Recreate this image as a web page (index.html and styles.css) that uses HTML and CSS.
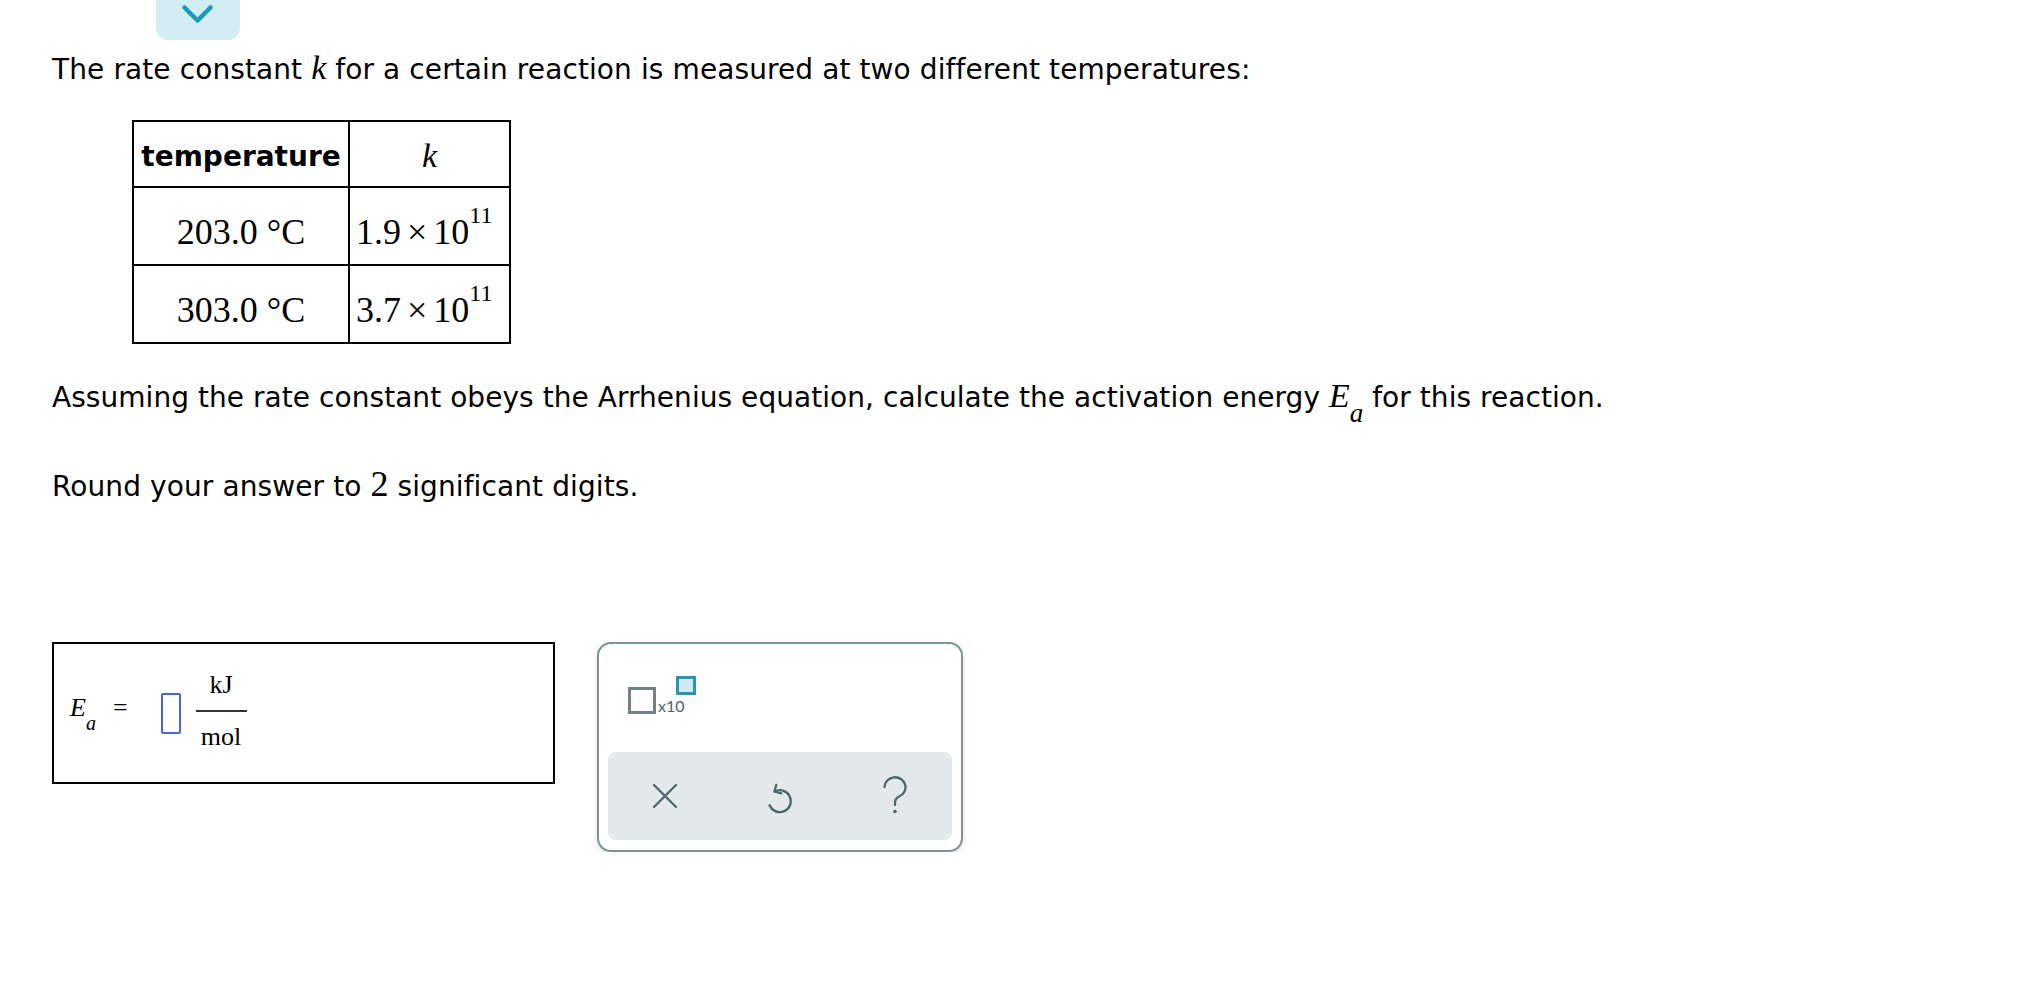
FILE: index.html
```html
<!DOCTYPE html>
<html lang="en">
<head>
<meta charset="utf-8">
<title>Arrhenius question</title>
<link rel="stylesheet" href="styles.css">
</head>
<body>
<div class="page">
  <div class="toggle">
    <svg class="chev" width="84" height="40" viewBox="0 0 84 40"><polyline points="28.5,7.5 41.5,20.5 54.5,7.5" fill="none" stroke="#1b9bb7" stroke-width="4.5" stroke-linecap="round" stroke-linejoin="round"/></svg>
  </div>

  <p class="line first">The rate constant <span class="m"><i>k</i></span> for a certain reaction is measured at two different temperatures:</p>

  <table class="data">
    <colgroup><col class="col1"><col class="col2"></colgroup>
    <tr class="hrow"><th>temperature</th><th><i class="mk">k</i></th></tr>
    <tr class="vrow"><td>203.0 °C</td><td class="c2">1.9<span class="times">×</span>10<sup>11</sup></td></tr>
    <tr class="vrow"><td>303.0 °C</td><td class="c2">3.7<span class="times">×</span>10<sup>11</sup></td></tr>
  </table>

  <p class="line assume">Assuming the rate constant obeys the Arrhenius equation, calculate the activation energy <span class="m"><i>E</i><sub class="msub"><i>a</i></sub></span> for this reaction.</p>

  <p class="line round">Round your answer to <span class="m big">2</span> significant digits.</p>

  <div class="answer-row">
    <div class="answer">
      <div class="lhs"><i>E</i><sub><i>a</i></sub><span class="eq">=</span></div>
      <div class="slot"></div>
      <div class="frac">
        <span class="num">kJ</span>
        <span class="bar"></span>
        <span class="den">mol</span>
      </div>
    </div>

    <div class="tools">
      <div class="ttop">
        <div class="x10">
          <span class="bigsq"></span>
          <span class="x10txt">x10</span>
          <span class="supsq"></span>
        </div>
      </div>
      <div class="tbar">
        <button class="tbtn" aria-label="Clear">
          <svg width="26" height="26" viewBox="0 0 26 26"><path d="M2 2 L24 24 M24 2 L2 24" stroke="#4d666c" stroke-width="2.3" stroke-linecap="round" fill="none"/></svg>
        </button>
        <button class="tbtn" aria-label="Undo">
          <svg width="28" height="38" viewBox="0 0 28 38"><path d="M8.5 14.5 A11 11 0 1 1 3.6 28.3" fill="none" stroke="#4d666c" stroke-width="2.3" stroke-linecap="round"/><path d="M10.3 7.8 L8.5 14.5 L15.3 16.3" fill="none" stroke="#4d666c" stroke-width="2.3" stroke-linecap="round" stroke-linejoin="round"/></svg>
        </button>
        <button class="tbtn" aria-label="Help">
          <svg width="26" height="40" viewBox="0 0 26 40"><path d="M2.5 11 A10.5 10 0 1 1 17 20.5 Q13 22.5 13 27 V29" fill="none" stroke="#4d666c" stroke-width="2.3" stroke-linecap="round"/><circle cx="13" cy="35.5" r="1.8" fill="#4d666c"/></svg>
        </button>
      </div>
    </div>
  </div>
</div>
</body>
</html>
```

FILE: styles.css
```css
html, body {
  margin: 0;
  padding: 0;
  background: #ffffff;
}

body {
  font-family: "DejaVu Sans", Verdana, sans-serif;
  font-size: 28px;
  color: #000000;
}

.page {
  padding-left: 52px;
}

.toggle {
  margin-left: 104px;
  width: 84px;
  height: 40px;
  background: #d2edf4;
  border-radius: 0 0 12px 12px;
}

.chev {
  display: block;
}

.line {
  margin: 0;
  line-height: 34px;
  white-space: nowrap;
  letter-spacing: 0.1px;
}

.first {
  margin-top: 13px;
}

.m {
  font-family: "Liberation Serif", "Times New Roman", serif;
  font-size: 34px;
  line-height: 0;
  letter-spacing: 0;
}

.m.big {
  font-size: 36px;
}

.msub {
  font-size: 27px;
  line-height: 0;
  vertical-align: -15px;
}

/* table */
.data {
  margin-left: 80px;
  margin-top: 33px;
  border-collapse: collapse;
  table-layout: fixed;
  width: 377px;
}

.col1 {
  width: 216px;
}

.col2 {
  width: 161px;
}

.data th,
.data td {
  border: 2px solid #000000;
  padding: 0;
  text-align: center;
}

.hrow {
  height: 66px;
}

.hrow th {
  font-weight: bold;
  font-size: 28px;
  line-height: 34px;
  vertical-align: middle;
  padding-top: 6px;
  box-sizing: border-box;
}

.mk {
  font-family: "Liberation Serif", "Times New Roman", serif;
  font-weight: normal;
  font-size: 34px;
}

.vrow {
  height: 78px;
}

.vrow td {
  font-family: "Liberation Serif", "Times New Roman", serif;
  font-size: 36px;
  line-height: 40px;
  vertical-align: top;
  padding-top: 24px;
  box-sizing: border-box;
  white-space: nowrap;
}

.vrow .c2 {
  text-align: left;
  padding-left: 6px;
}

.times {
  margin: 0 6px;
}

.data sup {
  font-size: 24px;
  line-height: 0;
  vertical-align: 21px;
}

.assume {
  margin-top: 37px;
  letter-spacing: 0.05px;
}

.round {
  margin-top: 55px;
}

/* answer area */
.answer-row {
  display: flex;
  align-items: flex-start;
  gap: 42px;
  margin-top: 138px;
}

.answer {
  width: 503px;
  height: 142px;
  box-sizing: border-box;
  border: 2px solid #000000;
  display: flex;
  align-items: center;
  padding-left: 16px;
}

.lhs {
  font-family: "Liberation Serif", "Times New Roman", serif;
  font-size: 26px;
  line-height: 26px;
  padding-bottom: 8px;
  white-space: nowrap;
}

.lhs sub {
  font-size: 20px;
  line-height: 0;
  vertical-align: -14px;
}

.eq {
  margin-left: 17px;
  margin-right: 33px;
}

.slot {
  width: 20px;
  height: 41px;
  box-sizing: border-box;
  border: 2px solid #4b63d8;
  border-radius: 2px;
}

.frac {
  display: flex;
  flex-direction: column;
  align-items: center;
  margin-left: 15px;
  margin-bottom: 4px;
  font-family: "Liberation Serif", "Times New Roman", serif;
  font-size: 26px;
  line-height: 26px;
}

.num {
  margin-bottom: 12px;
}

.bar {
  width: 51px;
  height: 2px;
  background: #333333;
}

.den {
  margin-top: 12px;
}

/* tools panel */
.tools {
  width: 366px;
  height: 210px;
  box-sizing: border-box;
  border: 2px solid #7f9397;
  border-radius: 14px;
  background: #ffffff;
  box-shadow: 0 2px 5px rgba(60, 80, 90, 0.18);
}

.ttop {
  height: 108px;
  box-sizing: border-box;
  padding-left: 29px;
  padding-top: 32px;
}

.x10 {
  display: flex;
  align-items: flex-end;
  height: 38px;
}

.bigsq {
  width: 28px;
  height: 27px;
  box-sizing: border-box;
  border: 3px solid #6f8387;
}

.x10txt {
  font-family: Lato, "Open Sans", sans-serif;
  font-size: 16px;
  line-height: 16px;
  color: #4d6166;
  margin-left: 2px;
}

.supsq {
  align-self: flex-start;
  width: 20px;
  height: 19px;
  box-sizing: border-box;
  border: 3px solid #2a96ad;
  background: #cdebf6;
  margin-left: -9px;
}

.tbar {
  margin: 0 9px;
  height: 88px;
  background: #e3e8eb;
  border-radius: 8px;
  display: grid;
  grid-template-columns: repeat(3, 1fr);
  align-items: center;
  justify-items: center;
}

.tbtn {
  border: 0;
  background: transparent;
  padding: 0;
  display: flex;
  align-items: center;
  justify-content: center;
}

.tbtn svg {
  display: block;
}
```
